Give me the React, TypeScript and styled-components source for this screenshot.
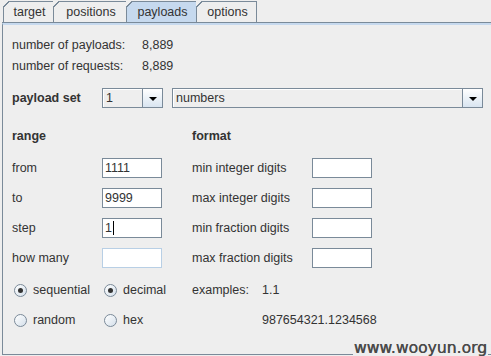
import React from 'react';
import styled, { createGlobalStyle } from 'styled-components';

const GlobalStyle = createGlobalStyle`
    html, body {
        margin: 0;
        padding: 0;
        background: #eeeeee;
    }
    body {
        font-family: "Liberation Sans", Arial, sans-serif;
        font-size: 12.5px;
        color: #333333;
    }
`;

const Window = styled.div`
    position: relative;
    width: 491px;
    height: 356px;
    overflow: hidden;
    background: #eeeeee;
`;

const Frame = styled.div`
    margin-left: 2px;
    display: flex;
    flex-direction: column;
`;

const TabStrip = styled.div`
    box-sizing: border-box;
    display: flex;
    height: 23px;
    padding: 1px 0 0 1px;
    border-bottom: 1px solid #7a8a99;
`;

const Tab = styled.div<{ $active?: boolean; $w: number }>`
    position: relative;
    box-sizing: border-box;
    width: ${p => p.$w}px;
    height: 21px;
    margin-left: -1px;
    padding-left: 2px;
    display: flex;
    align-items: center;
    justify-content: center;
    border: 1px solid #7a8a99;
    border-bottom: none;
    background: ${p => (p.$active ? '#c6d9ee' : '#eeeeee')};
    &:first-child {
        margin-left: 0;
    }
    &::before {
        content: '';
        position: absolute;
        top: -1px;
        left: -1px;
        width: 7px;
        height: 7px;
        background: linear-gradient(135deg, #eeeeee 0 4.2px, #7a8a99 4.2px 5.2px, transparent 5.2px);
    }
`;

const Panel = styled.div`
    box-sizing: border-box;
    height: 332px;
    border-top: 2px solid #c6d9ee;
    border-left: 1px solid #7a8a99;
    border-bottom: 1px solid #7a8a99;
    padding: 10px 0 0 9px;
`;

const StatsGrid = styled.div`
    display: grid;
    grid-template-columns: 130px auto;
    grid-auto-rows: 20px;
    row-gap: 1px;
    align-items: center;
`;

const PayloadRow = styled.div`
    display: flex;
    align-items: center;
    height: 20px;
    margin-top: 12px;
`;

const RowLabel = styled.span`
    flex: 0 0 90px;
    font-weight: bold;
`;

const Bold = styled.span`
    font-weight: bold;
`;

const Combo = styled.div<{ $w: number }>`
    box-sizing: border-box;
    flex: 0 0 ${p => p.$w}px;
    display: flex;
    height: 20px;
    margin-right: 9px;
    border: 1px solid #7a8a99;
    background: #eeeeee;
`;

const ComboText = styled.div`
    flex: 1;
    padding-left: 2px;
    line-height: 17px;
    border-top: 1px solid #ffffff;
    border-left: 1px solid #ffffff;
`;

const ArrowButton = styled.div`
    flex: 0 0 19px;
    display: flex;
    align-items: center;
    justify-content: center;
    border-left: 1px solid #7a8a99;
    background: linear-gradient(#ffffff, #d9e5f1);
    &::after {
        content: '';
        width: 0;
        height: 0;
        margin-top: 1px;
        border-left: 4px solid transparent;
        border-right: 4px solid transparent;
        border-top: 4px solid #000000;
    }
`;

const HeaderRow = styled.div`
    display: grid;
    grid-template-columns: 180px auto;
    line-height: 20px;
    margin-top: 18px;
`;

const FormGrid = styled.div`
    display: grid;
    grid-template-columns: 90px 90px 120px 60px;
    grid-auto-rows: 20px;
    row-gap: 10px;
    margin-top: 12px;
    align-items: center;
`;

const TextField = styled.div<{ $disabled?: boolean }>`
    box-sizing: border-box;
    width: 60px;
    height: 20px;
    border: 1px solid ${p => (p.$disabled ? '#b8cfe5' : '#7a8a99')};
    background: #ffffff;
    padding-left: 2px;
    line-height: 18px;
    display: flex;
    align-items: center;
`;

const Caret = styled.span`
    display: inline-block;
    width: 1px;
    height: 14px;
    margin-left: 1px;
    background: #000000;
`;

const OptionsGrid = styled.div`
    display: grid;
    grid-template-columns: 90px 90px 70px auto;
    grid-auto-rows: 20px;
    row-gap: 10px;
    margin-top: 12px;
    align-items: center;
`;

const RadioItem = styled.div`
    display: flex;
    align-items: center;
    gap: 6px;
    padding-left: 2px;
`;

const RadioCircle = styled.span<{ $checked?: boolean }>`
    box-sizing: border-box;
    width: 13px;
    height: 13px;
    border-radius: 50%;
    border: 1px solid #7a8a99;
    background: linear-gradient(135deg, #ffffff, #d4dfea);
    display: flex;
    align-items: center;
    justify-content: center;
    &::after {
        content: '';
        width: 5px;
        height: 5px;
        border-radius: 50%;
        background: ${p => (p.$checked ? '#333333' : 'transparent')};
    }
`;

const Watermark = styled.div`
    position: absolute;
    right: 3px;
    bottom: 0;
    padding: 0 1px;
    background: #eeeeee;
    font-family: "DejaVu Sans", Verdana, sans-serif;
    font-size: 15.6px;
    line-height: 16px;
    color: #4a4a4a;
    text-shadow: 0.4px 0 0 #4a4a4a;
`;

const tabs = [
    { label: 'target', w: 51 },
    { label: 'positions', w: 74 },
    { label: 'payloads', w: 71, active: true },
    { label: 'options', w: 61 },
];

const App: React.FC = () => {
    return (
        <>
            <GlobalStyle />
            <Window>
                <Frame>
                    <TabStrip>
                        {tabs.map(t => (
                            <Tab key={t.label} $w={t.w} $active={t.active}>{t.label}</Tab>
                        ))}
                    </TabStrip>
                    <Panel>
                        <StatsGrid>
                            <span>number of payloads:</span>
                            <span>8,889</span>
                            <span>number of requests:</span>
                            <span>8,889</span>
                        </StatsGrid>
                        <PayloadRow>
                            <RowLabel>payload set</RowLabel>
                            <Combo $w={61}>
                                <ComboText>1</ComboText>
                                <ArrowButton />
                            </Combo>
                            <Combo $w={311}>
                                <ComboText>numbers</ComboText>
                                <ArrowButton />
                            </Combo>
                        </PayloadRow>
                        <HeaderRow>
                            <Bold>range</Bold>
                            <Bold>format</Bold>
                        </HeaderRow>
                        <FormGrid>
                            <span>from</span>
                            <TextField>1111</TextField>
                            <span>min integer digits</span>
                            <TextField />
                            <span>to</span>
                            <TextField>9999</TextField>
                            <span>max integer digits</span>
                            <TextField />
                            <span>step</span>
                            <TextField>1<Caret /></TextField>
                            <span>min fraction digits</span>
                            <TextField />
                            <span>how many</span>
                            <TextField $disabled />
                            <span>max fraction digits</span>
                            <TextField />
                        </FormGrid>
                        <OptionsGrid>
                            <RadioItem><RadioCircle $checked />sequential</RadioItem>
                            <RadioItem><RadioCircle $checked />decimal</RadioItem>
                            <span>examples:</span>
                            <span>1.1</span>
                            <RadioItem><RadioCircle />random</RadioItem>
                            <RadioItem><RadioCircle />hex</RadioItem>
                            <span />
                            <span>987654321.1234568</span>
                        </OptionsGrid>
                    </Panel>
                </Frame>
                <Watermark>www.wooyun.org</Watermark>
            </Window>
        </>
    );
};

export default App;
